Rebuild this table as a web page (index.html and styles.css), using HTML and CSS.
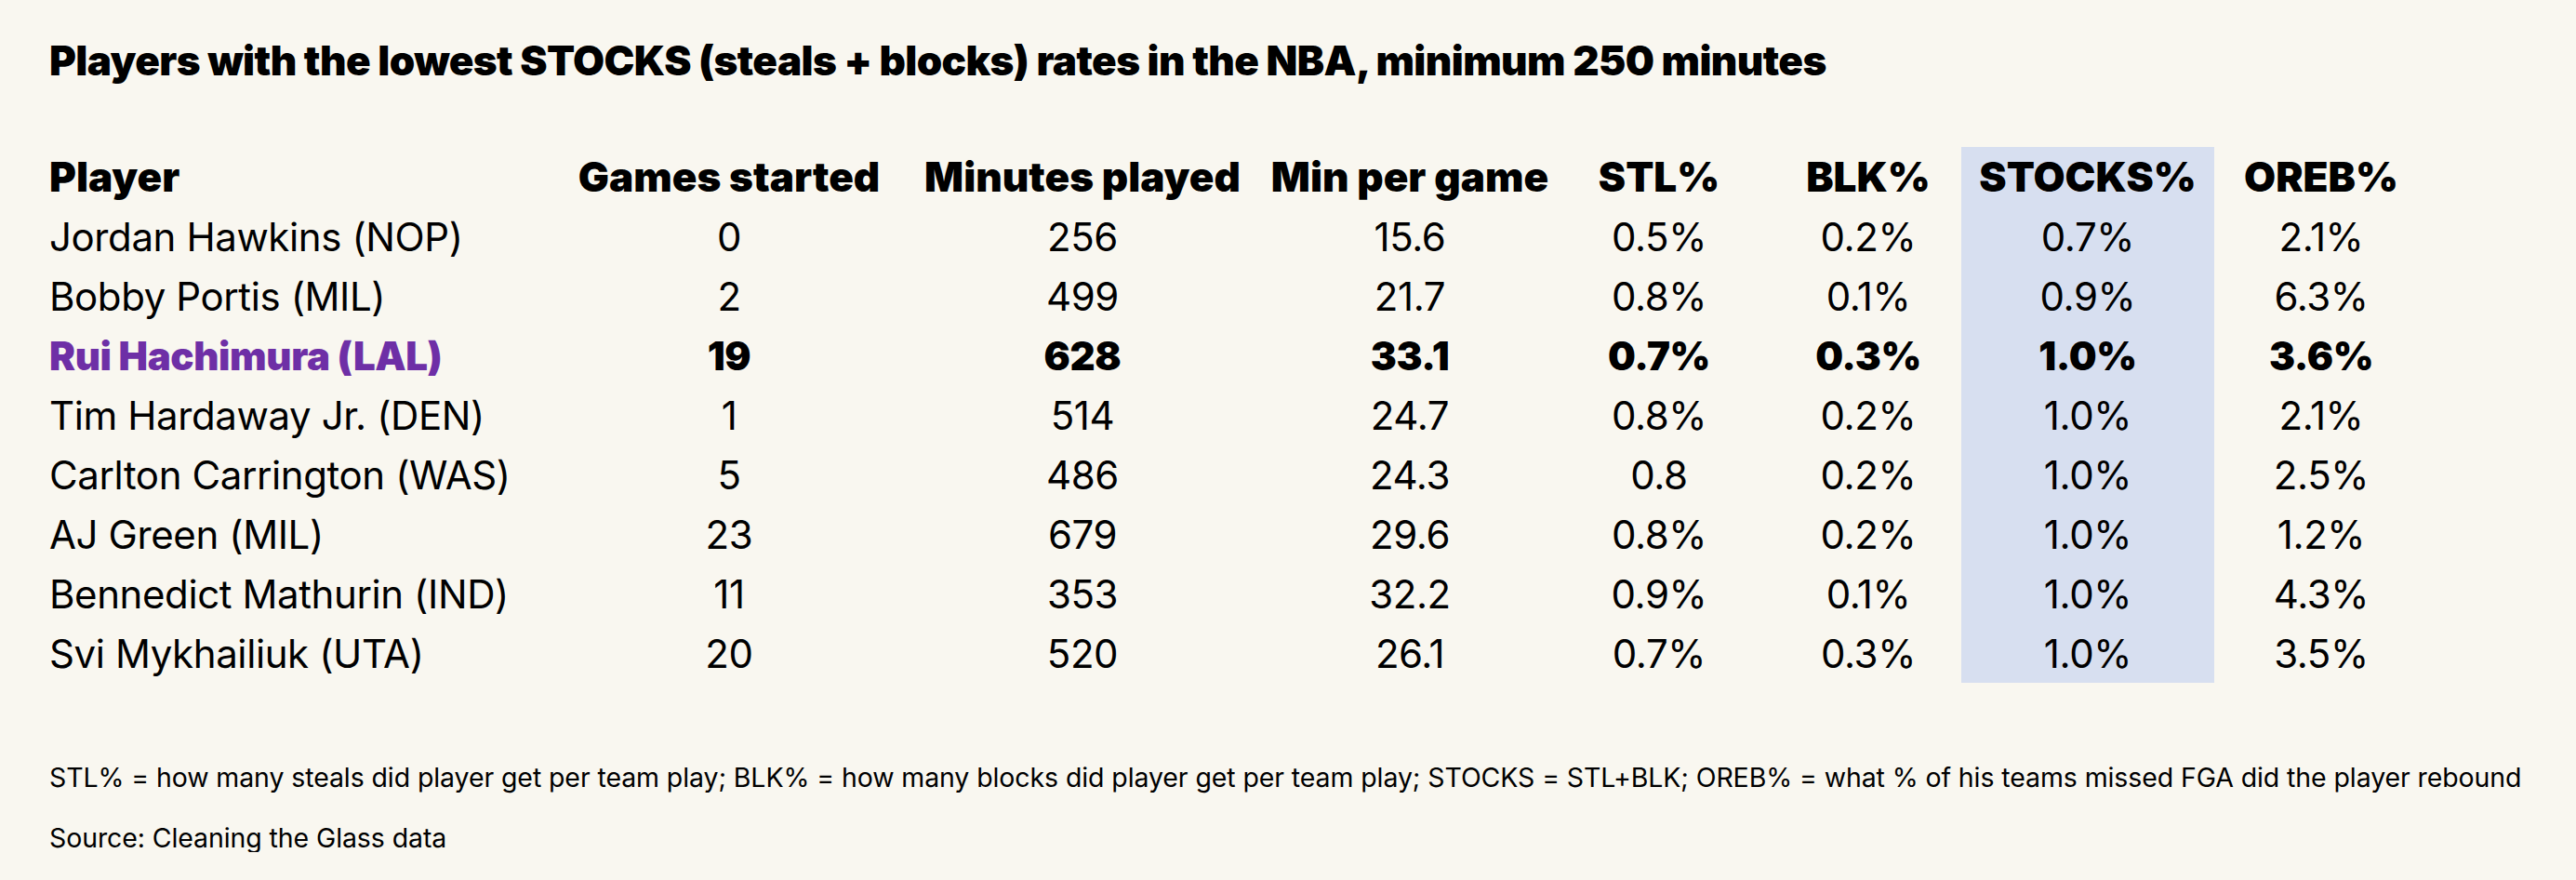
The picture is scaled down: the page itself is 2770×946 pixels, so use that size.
FILE: index.html
```html
<!DOCTYPE html>
<html lang="en">
<head>
<meta charset="utf-8">
<title>Lowest STOCKS rates</title>
<link rel="stylesheet" href="styles.css">
</head>
<body>
<main class="page">
  <h1 class="title">Players with the lowest STOCKS (steals + blocks) rates in the NBA, minimum 250 minutes</h1>
  <div class="table">
    <div class="row head">
      <div class="cell name">Player</div>
      <div class="cell">Games started</div>
      <div class="cell">Minutes played</div>
      <div class="cell">Min per game</div>
      <div class="cell">STL%</div>
      <div class="cell">BLK%</div>
      <div class="cell hl">STOCKS%</div>
      <div class="cell">OREB%</div>
    </div>
    <div class="row">
      <div class="cell name">Jordan Hawkins (NOP)</div>
      <div class="cell">0</div><div class="cell">256</div><div class="cell">15.6</div>
      <div class="cell">0.5%</div><div class="cell">0.2%</div><div class="cell hl">0.7%</div><div class="cell">2.1%</div>
    </div>
    <div class="row">
      <div class="cell name">Bobby Portis (MIL)</div>
      <div class="cell">2</div><div class="cell">499</div><div class="cell">21.7</div>
      <div class="cell">0.8%</div><div class="cell">0.1%</div><div class="cell hl">0.9%</div><div class="cell">6.3%</div>
    </div>
    <div class="row strong">
      <div class="cell name accent">Rui Hachimura (LAL)</div>
      <div class="cell">19</div><div class="cell">628</div><div class="cell">33.1</div>
      <div class="cell">0.7%</div><div class="cell">0.3%</div><div class="cell hl">1.0%</div><div class="cell">3.6%</div>
    </div>
    <div class="row">
      <div class="cell name">Tim Hardaway Jr. (DEN)</div>
      <div class="cell">1</div><div class="cell">514</div><div class="cell">24.7</div>
      <div class="cell">0.8%</div><div class="cell">0.2%</div><div class="cell hl">1.0%</div><div class="cell">2.1%</div>
    </div>
    <div class="row">
      <div class="cell name">Carlton Carrington (WAS)</div>
      <div class="cell">5</div><div class="cell">486</div><div class="cell">24.3</div>
      <div class="cell">0.8</div><div class="cell">0.2%</div><div class="cell hl">1.0%</div><div class="cell">2.5%</div>
    </div>
    <div class="row">
      <div class="cell name">AJ Green (MIL)</div>
      <div class="cell">23</div><div class="cell">679</div><div class="cell">29.6</div>
      <div class="cell">0.8%</div><div class="cell">0.2%</div><div class="cell hl">1.0%</div><div class="cell">1.2%</div>
    </div>
    <div class="row">
      <div class="cell name">Bennedict Mathurin (IND)</div>
      <div class="cell">11</div><div class="cell">353</div><div class="cell">32.2</div>
      <div class="cell">0.9%</div><div class="cell">0.1%</div><div class="cell hl">1.0%</div><div class="cell">4.3%</div>
    </div>
    <div class="row">
      <div class="cell name">Svi Mykhailiuk (UTA)</div>
      <div class="cell">20</div><div class="cell">520</div><div class="cell">26.1</div>
      <div class="cell">0.7%</div><div class="cell">0.3%</div><div class="cell hl">1.0%</div><div class="cell">3.5%</div>
    </div>
  </div>
  <p class="note">STL% = how many steals did player get per team play; BLK% = how many blocks did player get per team play; STOCKS = STL+BLK; OREB% = what % of his teams missed FGA did the player rebound</p>
  <p class="note source">Source: Cleaning the Glass data</p>
</main>
</body>
</html>
```

FILE: styles.css
```css
html, body {
  margin: 0;
  padding: 0;
  background: #f9f7f0;
}

body {
  font-family: Inter, "Liberation Sans", sans-serif;
  color: #000;
}

.page {
  padding: 39px 0 0 53px;
}

.title {
  margin: 0;
  font-size: 44px;
  line-height: 52px;
  font-weight: 900;
  letter-spacing: -0.6px;
  white-space: nowrap;
}

.table {
  margin-top: 67px;
  display: flex;
  flex-direction: column;
}

.row {
  display: grid;
  grid-template-columns: 560px 342px 418px 286px 250px 200px 272px 230px;
  height: 64px;
  font-size: 42px;
  font-weight: 400;
  letter-spacing: -0.4px;
}

.row.head {
  font-size: 44px;
  font-weight: 900;
  letter-spacing: 0;
}

.row.strong {
  font-weight: 900;
}

.cell {
  display: flex;
  align-items: center;
  justify-content: center;
  white-space: nowrap;
}

.cell.name {
  justify-content: flex-start;
}

.cell.hl {
  background: #d7dff0;
}

.accent {
  color: #6e2fa6;
}

.note {
  margin: 87px 0 0;
  font-size: 28.5px;
  line-height: 30px;
  letter-spacing: -0.1px;
  white-space: nowrap;
}

.note.source {
  margin-top: 35px;
}
```
